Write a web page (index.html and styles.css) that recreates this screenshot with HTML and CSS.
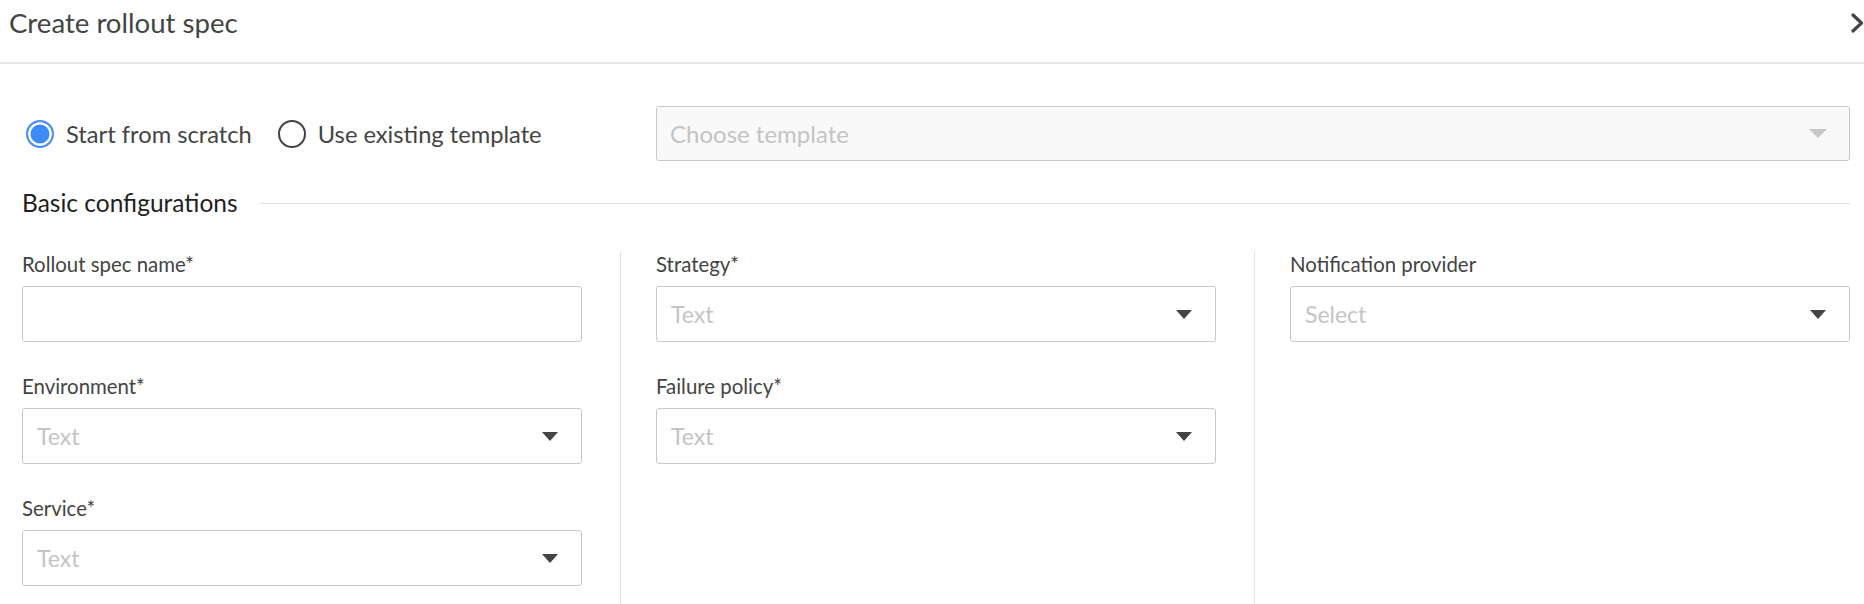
FILE: index.html
```html
<!DOCTYPE html>
<html lang="en">
<head>
<meta charset="utf-8">
<title>Create rollout spec</title>
<link rel="stylesheet" href="styles.css">
</head>
<body>
<div class="modal">
  <header class="modal-header">
    <h1 class="title">Create rollout spec</h1>
    <button class="close" aria-label="Close">
      <svg width="14" height="20" viewBox="0 0 14 20"><polyline points="2,2 10.5,10 2,18" fill="none" stroke="#444" stroke-width="3.2" stroke-linecap="round" stroke-linejoin="round"/></svg>
    </button>
  </header>
  <div class="modal-body">
    <div class="source-row">
      <div class="radios">
        <label class="radio checked"><span class="dot"></span><span class="radio-text">Start from scratch</span></label>
        <label class="radio"><span class="dot"></span><span class="radio-text">Use existing template</span></label>
      </div>
      <div class="select disabled"><span class="placeholder">Choose template</span><span class="caret light"></span></div>
    </div>

    <div class="section-head">
      <h2 class="section-title">Basic configurations</h2>
      <span class="rule"></span>
    </div>

    <div class="columns">
      <div class="col">
        <div class="field">
          <div class="label">Rollout spec name*</div>
          <div class="input"></div>
        </div>
        <div class="field">
          <div class="label">Environment*</div>
          <div class="input"><span class="placeholder">Text</span><span class="caret"></span></div>
        </div>
        <div class="field">
          <div class="label">Service*</div>
          <div class="input"><span class="placeholder">Text</span><span class="caret"></span></div>
        </div>
      </div>
      <div class="col">
        <div class="field">
          <div class="label">Strategy*</div>
          <div class="input"><span class="placeholder">Text</span><span class="caret"></span></div>
        </div>
        <div class="field">
          <div class="label">Failure policy*</div>
          <div class="input"><span class="placeholder">Text</span><span class="caret"></span></div>
        </div>
      </div>
      <div class="col">
        <div class="field">
          <div class="label">Notification provider</div>
          <div class="input"><span class="placeholder">Select</span><span class="caret"></span></div>
        </div>
      </div>
    </div>
  </div>
</div>
</body>
</html>
```
FILE: styles.css
```css
html, body {
  margin: 0;
  padding: 0;
  background: #fff;
}
body {
  width: 1864px;
  height: 604px;
  overflow: hidden;
  font-family: "Lato", "Noto Sans", sans-serif;
  color: #333;
}
.modal {
  width: 1864px;
}
.modal-header {
  display: flex;
  justify-content: space-between;
  align-items: flex-start;
  height: 62px;
  padding-left: 9px;
  border-bottom: 2px solid #e6e6e6;
}
.title {
  margin: 6px 0 0 0;
  font-size: 27.6px;
  line-height: 34px;
  font-weight: 400;
  color: #444;
}
.close {
  border: 0;
  background: none;
  padding: 0;
  margin: 13px -1px 0 0;
  width: 14px;
  height: 20px;
  display: block;
}
.close svg { display: block; }

.modal-body {
  padding: 0 14px 0 22px;
}
.source-row {
  display: flex;
  align-items: center;
  margin-top: 42px;
  height: 55px;
}
.radios {
  width: 630px;
  padding-left: 4px;
  display: flex;
  align-items: center;
  gap: 26px;
}
.radio {
  display: flex;
  align-items: center;
  gap: 12px;
  font-size: 23.7px;
  color: #444;
}
.dot {
  width: 28px;
  height: 28px;
  box-sizing: border-box;
  border: 2px solid #444;
  border-radius: 50%;
  flex: none;
}
.radio.checked .dot {
  border-color: #4b8ff5;
  background: #3e8af7;
  box-shadow: inset 0 0 0 2.5px #fff;
}
.select {
  flex: 1;
  height: 55px;
  box-sizing: border-box;
  border: 1px solid #c8c8c8;
  border-radius: 3px;
  display: flex;
  align-items: center;
  justify-content: space-between;
  padding: 0 22px 0 13px;
}
.select.disabled {
  background: #f9f9f9;
}
.placeholder {
  font-size: 23px;
  color: #c4c4c4;
}
.select .placeholder {
  font-size: 24px;
}
.caret {
  width: 0;
  height: 0;
  border-left: 8px solid transparent;
  border-right: 8px solid transparent;
  border-top: 9px solid #444;
}
.caret.light {
  border-left-width: 9px;
  border-right-width: 9px;
  border-top-color: #c6c6c6;
}

.section-head {
  display: flex;
  align-items: center;
  margin-top: 27px;
  height: 30px;
}
.section-title {
  margin: 0;
  font-size: 24.5px;
  line-height: 30px;
  font-weight: 400;
  color: #1f1f1f;
}
.rule {
  flex: 1;
  height: 1px;
  background: #e3e3e3;
  margin-left: 22px;
}

.columns {
  display: flex;
  margin-top: 33px;
  height: 360px;
}
.col {
  width: 560px;
  flex: none;
}
.col + .col {
  margin-left: 38px;
  padding-left: 35px;
  border-left: 1px solid #e3e3e3;
}
.field + .field {
  margin-top: 31px;
}
.label {
  font-size: 20.4px;
  line-height: 26px;
  color: #444;
  margin-bottom: 9px;
}
.input {
  height: 56px;
  box-sizing: border-box;
  border: 1px solid #c8c8c8;
  border-radius: 3px;
  display: flex;
  align-items: center;
  justify-content: space-between;
  padding: 0 23px 0 14px;
}
```
